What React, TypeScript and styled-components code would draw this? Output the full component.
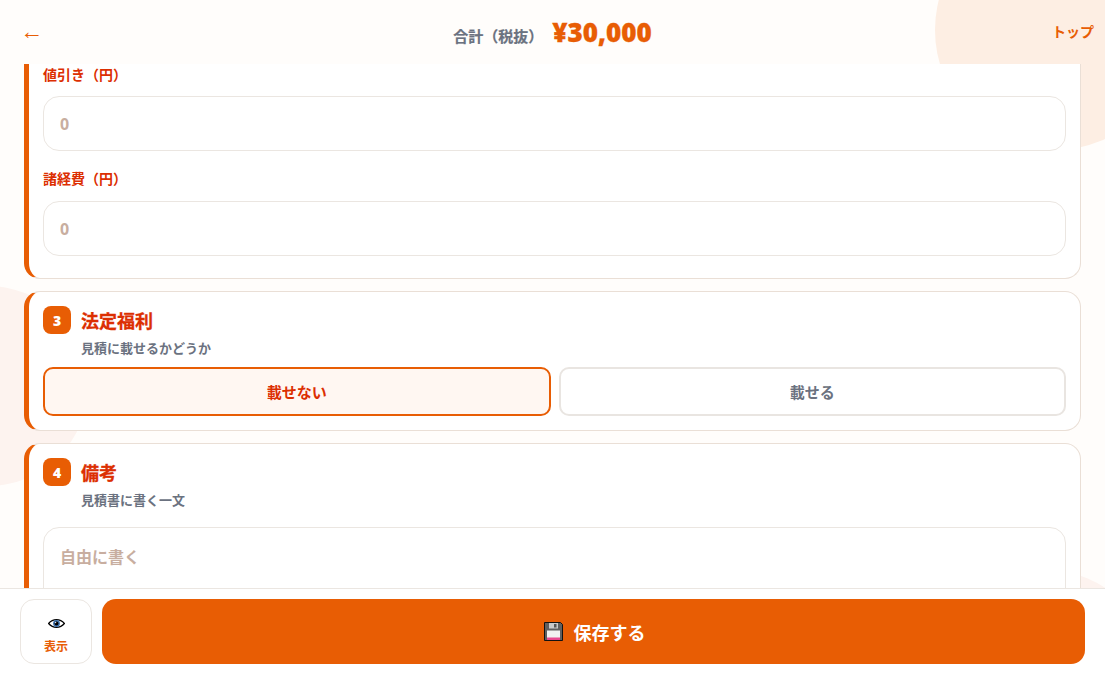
import styled, { createGlobalStyle } from "styled-components";

const orange = "#e85d04";
const red = "#dc2f02";
const gray = "#6b7280";

const GlobalStyle = createGlobalStyle`
  html, body {
    margin: 0;
    padding: 0;
    height: 100%;
    background: #fffdfb;
  }
  * {
    box-sizing: border-box;
  }
`;

const Page = styled.div`
  position: relative;
  height: 100vh;
  display: flex;
  flex-direction: column;
  overflow: hidden;
  font-family: "Noto Sans", "Noto Sans CJK JP", sans-serif;
  font-weight: 700;
`;

// decorative circles behind the cards
const Blob = styled.div<{ $x: number; $y: number; $r: number; $color: string }>`
  position: absolute;
  left: ${(p) => p.$x - p.$r}px;
  top: ${(p) => p.$y - p.$r}px;
  width: ${(p) => p.$r * 2}px;
  height: ${(p) => p.$r * 2}px;
  border-radius: 50%;
  background: ${(p) => p.$color};
`;

const Header = styled.header`
  position: relative;
  height: 64px;
  flex-shrink: 0;
  display: grid;
  grid-template-columns: 1fr auto 1fr;
  align-items: center;
  padding: 0 11px;
`;

const BackLink = styled.span`
  color: ${orange};
  font-size: 23px;
  font-weight: 400;
  line-height: 1;
  margin: 0 0 2px 9px;
  font-family: "Liberation Sans", sans-serif;
`;

const Total = styled.div`
  display: flex;
  align-items: baseline;
  gap: 9px;
`;

const TotalLabel = styled.span`
  color: ${gray};
  font-size: 15px;
  -webkit-text-stroke: 0.2px ${gray};
`;

const TotalValue = styled.span`
  color: ${orange};
  font-size: 26px;
  font-weight: 900;
  line-height: 1;
  -webkit-text-stroke: 0.3px ${orange};
`;

const TopLink = styled.span`
  justify-self: end;
  color: ${orange};
  font-size: 14px;
  margin-bottom: 2px;
`;

const Main = styled.main`
  position: relative;
  flex: 1;
  min-height: 0;
  overflow: hidden;
  padding: 0 24px;
  display: flex;
  flex-direction: column;
  gap: 12px;
`;

const Card = styled.section<{ $clipped?: boolean }>`
  flex-shrink: 0;
  background: #fff;
  border: 1px solid #eadfd6;
  border-left: 5px solid ${orange};
  border-radius: ${(p) => (p.$clipped ? "0 0 16px 16px" : "16px")};
  border-top-width: ${(p) => (p.$clipped ? 0 : 1)}px;
  padding: ${(p) => (p.$clipped ? "0" : "14px")} 14px 14px 14px;
`;

const FieldLabel = styled.label`
  display: block;
  color: ${red};
  font-size: 14px;
  line-height: 22px;
`;

const TextInput = styled.input`
  display: block;
  width: 100%;
  height: 55px;
  margin-top: 10px;
  padding: 0 16px;
  border: 1px solid #ebe6e1;
  border-radius: 16px;
  background: #fff;
  font: inherit;
  font-size: 16px;
  &::placeholder {
    color: #c8aea0;
    opacity: 1;
  }
`;

const Field = styled.div`
  padding-bottom: 8px;
  & + & {
    margin-top: 9px;
  }
  & + & ${TextInput} {
    margin-top: 11px;
  }
`;

const TextArea = styled.textarea`
  display: block;
  width: 100%;
  height: 120px;
  margin-top: 17px;
  padding: 16px;
  border: 1px solid #ebe6e1;
  border-radius: 16px;
  background: #fff;
  font: inherit;
  font-size: 16px;
  line-height: 26px;
  resize: none;
  &::placeholder {
    color: #c8aea0;
    opacity: 1;
  }
`;

const SectionHead = styled.div`
  display: flex;
  align-items: center;
  gap: 10px;
`;

const Badge = styled.span`
  width: 28px;
  height: 28px;
  border-radius: 8px;
  background: ${orange};
  color: #fff;
  font-size: 14px;
  font-weight: 900;
  display: flex;
  align-items: center;
  justify-content: center;
`;

const SectionTitle = styled.h2`
  margin: 2px 0 0;
  color: ${red};
  font-size: 18px;
  line-height: 26px;
  font-weight: 700;
  -webkit-text-stroke: 0.3px ${red};
`;

const SectionHint = styled.p`
  margin: 4px 0 0 38px;
  color: ${gray};
  font-size: 13px;
  line-height: 20px;
`;

const ToggleRow = styled.div`
  display: grid;
  grid-template-columns: 1fr 1fr;
  gap: 8px;
  margin-top: 9px;
`;

const Toggle = styled.button<{ $active?: boolean }>`
  height: 49px;
  border: 2px solid ${(p) => (p.$active ? orange : "#e9e5e1")};
  border-radius: 10px;
  background: ${(p) => (p.$active ? "#fff7f2" : "#fff")};
  color: ${(p) => (p.$active ? red : gray)};
  font: inherit;
  font-size: 15px;
`;

const Footer = styled.footer`
  position: relative;
  flex-shrink: 0;
  display: flex;
  gap: 10px;
  height: 86px;
  padding: 10px 20px;
  background: #fff;
  border-top: 1px solid #ebe6e1;
`;

const PreviewButton = styled.button`
  width: 72px;
  border: 1px solid #ebe6e1;
  border-radius: 14px;
  background: #fff;
  color: ${orange};
  font: inherit;
  font-size: 12px;
  line-height: 16px;
  padding: 11px 0 0;
  display: flex;
  flex-direction: column;
  align-items: center;
  justify-content: center;
  gap: 11px;
`;

const SaveButton = styled.button`
  flex: 1;
  border: none;
  border-radius: 14px;
  background: ${orange};
  color: #fff;
  font: inherit;
  font-size: 18px;
  padding: 0 0 0 2px;
  display: flex;
  align-items: center;
  justify-content: center;
  gap: 11px;
`;

const EyeIcon = () => (
  <svg width="17" height="9" viewBox="0 0 17 9">
    <path d="M0.6 4.5C3 1.6 5.6 0.6 8.5 0.6S14 1.6 16.4 4.5C14 7.4 11.4 8.4 8.5 8.4S3 7.4 0.6 4.5Z" fill="#fff" stroke="#000" strokeWidth="1.2" />
    <circle cx="8.5" cy="4.5" r="3.4" fill="#3b6ea8" />
    <circle cx="8.5" cy="4.5" r="1.9" fill="#000" />
    <circle cx="7.6" cy="3.6" r="0.7" fill="#fff" />
  </svg>
);

const SaveIcon = () => (
  <svg width="19" height="19" viewBox="0 0 19 19">
    <path d="M0.5 0.5H16.5L18.5 2.5V18.5H0.5Z" fill="#5f5f5f" stroke="#111" strokeWidth="1" />
    <rect x="5" y="1" width="9" height="5.5" fill="#c9c9c9" />
    <rect x="10" y="2" width="2.5" height="3.5" fill="#555" />
    <rect x="3" y="8.5" width="13" height="9.5" fill="#f1f1f1" />
    <rect x="3" y="15.5" width="13" height="2.5" fill="#e8488f" />
  </svg>
);

export default function App() {
  return (
    <Page>
      <GlobalStyle />
      <Blob $x={1055} $y={30} $r={120} $color="#fdeee3" />
      <Blob $x={-12} $y={386} $r={100} $color="#fdf3ef" />
      <Blob $x={1045} $y={680} $r={110} $color="#fdf3ef" />

      <Header>
        <BackLink>←</BackLink>
        <Total>
          <TotalLabel>合計（税抜）</TotalLabel>
          <TotalValue>¥30,000</TotalValue>
        </Total>
        <TopLink>トップ</TopLink>
      </Header>

      <Main>
        <Card $clipped>
          <Field>
            <FieldLabel>値引き（円）</FieldLabel>
            <TextInput placeholder="0" />
          </Field>
          <Field>
            <FieldLabel>諸経費（円）</FieldLabel>
            <TextInput placeholder="0" />
          </Field>
        </Card>

        <Card>
          <SectionHead>
            <Badge>3</Badge>
            <SectionTitle>法定福利</SectionTitle>
          </SectionHead>
          <SectionHint>見積に載せるかどうか</SectionHint>
          <ToggleRow>
            <Toggle $active>載せない</Toggle>
            <Toggle>載せる</Toggle>
          </ToggleRow>
        </Card>

        <Card>
          <SectionHead>
            <Badge>4</Badge>
            <SectionTitle>備考</SectionTitle>
          </SectionHead>
          <SectionHint>見積書に書く一文</SectionHint>
          <TextArea placeholder="自由に書く" />
        </Card>
      </Main>

      <Footer>
        <PreviewButton>
          <EyeIcon />
          表示
        </PreviewButton>
        <SaveButton>
          <SaveIcon />
          保存する
        </SaveButton>
      </Footer>
    </Page>
  );
}
